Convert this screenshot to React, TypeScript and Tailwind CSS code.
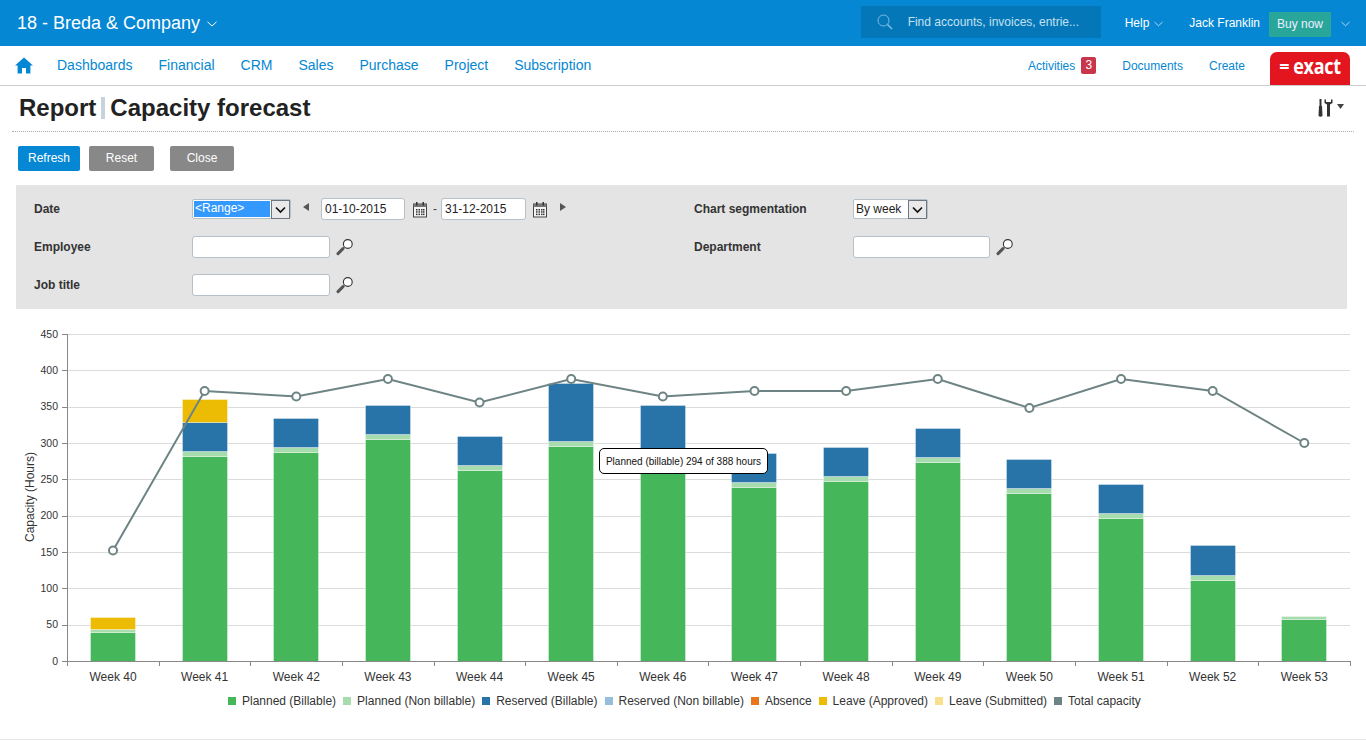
import React from "react";

const FONT = { fontFamily: '"Liberation Sans", Arial, sans-serif' };

const Chevron = ({ className = "", color = "#ffffff", w = 10, h = 6 }: { className?: string; color?: string; w?: number; h?: number }) => (
  <svg width={w} height={h} viewBox="0 0 10 6" className={className} fill="none">
    <path d="M0.5 0.8 L5 5 L9.5 0.8" stroke={color} strokeWidth="1" />
  </svg>
);

const Magnifier = () => (
  <svg width="18" height="18" viewBox="0 0 18 18" className="shrink-0">
    <circle cx="11.8" cy="6" r="4.4" fill="#fff" stroke="#333" strokeWidth="1.1" />
    <path d="M8.4 9.2 L7.2 10.4" stroke="#777" strokeWidth="1.4" />
    <path d="M7 10.6 L2 15.6" stroke="#555" strokeWidth="3" strokeLinecap="round" />
  </svg>
);

const Calendar = () => (
  <svg width="16" height="17" viewBox="0 0 16 17" className="shrink-0">
    <rect x="1.5" y="3" width="13" height="13" fill="#f4f4f4" stroke="#444" strokeWidth="1" />
    <rect x="1.5" y="3" width="13" height="3" fill="#777" />
    <rect x="4" y="1" width="1.5" height="3.5" fill="#333" />
    <rect x="10.5" y="1" width="1.5" height="3.5" fill="#333" />
    {[5, 7.5, 10, 12].map((x) => [8, 10.2, 12.6].map((y) => <rect key={`${x}-${y}`} x={x - 1} y={y} width="1.5" height="1.5" fill="#333" />))}
  </svg>
);

const Dropdown = () => (
  <div className="w-[19px] h-[19px] bg-[#e9e9e9] border border-[#6f7780] flex items-center justify-center shrink-0">
    <svg width="11" height="8" viewBox="0 0 11 8" fill="none">
      <path d="M1 1.5 L5.5 6 L10 1.5" stroke="#111" strokeWidth="1.7" />
    </svg>
  </div>
);

const TextField = ({ value = "", w }: { value?: string; w: string }) => (
  <div className={`${w} h-[22px] bg-white border border-[#b5c0c9] rounded-[3px] pl-[3px] text-[12px] leading-[20px] text-[#222]`}>{value}</div>
);

const ArrowTri = ({ dir }: { dir: "l" | "r" }) => (
  <svg width="6" height="8" viewBox="0 0 6 8" className="shrink-0 mt-[-4px]">
    <path d={dir === "l" ? "M6 0 V8 L0 4 Z" : "M0 0 V8 L6 4 Z"} fill="#555" />
  </svg>
);

const weeks = [40, 41, 42, 43, 44, 45, 46, 47, 48, 49, 50, 51, 52, 53];
// page-pixel tops of each segment: green, light green, blue, yellow
const tops: number[][] = [
  [633, 630, 630, 618],
  [457, 452, 423, 400],
  [453, 448, 419, 419],
  [440, 435, 406, 406],
  [471, 466, 437, 437],
  [447, 442, 384, 384],
  [458, 453, 406, 406],
  [488, 483, 454, 454],
  [482, 477, 448, 448],
  [463, 458, 429, 429],
  [494, 489, 460, 460],
  [519, 514, 485, 485],
  [581, 576, 546, 546],
  [620, 617, 617, 617],
];
const lineY = [550.5, 391, 396.5, 379, 402.5, 379, 396.5, 391, 391, 379, 408, 379, 391, 443];
const STEP = 91.64;
const cx = (i: number) => 113 + i * STEP;

const Chart = () => {
  const gridVals = [0, 50, 100, 150, 200, 250, 300, 350, 400, 450];
  const yOf = (v: number) => 661 - (v / 450) * 327;
  const colors = ["#46b65a", "#a7dcae", "#2874a8", "#ecbc05"];
  return (
    <svg width="1366" height="370" viewBox="0 325 1366 370" className="block" style={FONT}>
      {gridVals.slice(1).map((v) => (
        <line key={v} x1="67" x2="1350" y1={Math.round(yOf(v)) + 0.5} y2={Math.round(yOf(v)) + 0.5} stroke="#dcdcdc" />
      ))}
      {gridVals.map((v) => (
        <g key={v}>
          <line x1="62" x2="67" y1={Math.round(yOf(v)) + 0.5} y2={Math.round(yOf(v)) + 0.5} stroke="#888" />
          <text x="58" y={yOf(v) + 3.5} textAnchor="end" fontSize="10.5" fill="#333">{v}</text>
        </g>
      ))}
      {tops.map((t, i) => {
        const x = Math.round(cx(i) - 23);
        const segs = [
          [t[0], 662],
          [t[1], t[0]],
          [t[2], t[1]],
          [t[3], t[2]],
        ];
        return (
          <g key={i}>
            {segs.map(([a, b], k) =>
              b > a ? <rect key={k} x={x + 0.5} y={a - 0.5} width="45" height={b - a} fill={colors[k]} stroke="#ffffff" strokeOpacity="0.35" /> : null
            )}
          </g>
        );
      })}
      <line x1="67.5" x2="67.5" y1="334" y2="661" stroke="#888" />
      <line x1="67" x2="1351" y1="661.5" y2="661.5" stroke="#888" />
      {Array.from({ length: 15 }).map((_, i) => (
        <line key={i} x1={Math.round(67 + i * STEP) + 0.5} x2={Math.round(67 + i * STEP) + 0.5} y1="661" y2="666" stroke="#888" />
      ))}
      <polyline points={lineY.map((y, i) => `${cx(i)},${y}`).join(" ")} fill="none" stroke="#6e8484" strokeWidth="2" />
      {lineY.map((y, i) => (
        <circle key={i} cx={cx(i)} cy={y} r="4" fill="#fff" stroke="#6e8484" strokeWidth="2" />
      ))}
      {weeks.map((w, i) => (
        <text key={w} x={cx(i)} y="681" textAnchor="middle" fontSize="12" fill="#333">Week {w}</text>
      ))}
      <text transform="translate(33.5 497) rotate(-90)" textAnchor="middle" fontSize="12" fill="#333">Capacity (Hours)</text>
    </svg>
  );
};

const legend: [string, string][] = [
  ["Planned (Billable)", "#46b65a"],
  ["Planned (Non billable)", "#a7dcae"],
  ["Reserved (Billable)", "#2874a8"],
  ["Reserved (Non billable)", "#94bedb"],
  ["Absence", "#e8761c"],
  ["Leave (Approved)", "#ecbc05"],
  ["Leave (Submitted)", "#f9e08a"],
  ["Total capacity", "#6e8484"],
];

export default function App() {
  return (
    <div className="w-[1366px] h-[740px] overflow-hidden bg-white flex flex-col text-[#222]" style={FONT}>
      {/* top bar */}
      <header className="h-[46px] bg-[#0587d3] flex items-center text-white shrink-0">
        <div className="pl-[17px] flex items-center text-[18px] leading-none">
          18 - Breda &amp; Company
          <Chevron className="ml-[7px] mt-[2px]" />
        </div>
        <div className="ml-auto w-[240px] h-[32px] mb-[2px] bg-[#0477b8] flex items-center pl-[16px]">
          <svg width="16" height="17" viewBox="0 0 16 17" fill="none">
            <circle cx="6.5" cy="6.5" r="5.5" stroke="#7fbde3" strokeWidth="1" />
            <path d="M10.5 10.5 L15 15" stroke="#7fbde3" strokeWidth="1.6" />
          </svg>
          <span className="ml-[15px] text-[12px] text-[#c4e0f2]">Find accounts, invoices, entrie...</span>
        </div>
        <div className="ml-[24px] flex items-center text-[12px]">
          Help
          <Chevron className="ml-[5px] mt-[1px]" color="#bfe0f5" w={9} />
        </div>
        <div className="ml-[26px] text-[12px] whitespace-nowrap">Jack Franklin</div>
        <div className="ml-[9px] mt-[2px] w-[62px] h-[25px] bg-[#29a69a] flex items-center justify-center text-[12px] font-normal text-[#eef]">Buy now</div>
        <Chevron className="ml-[10px] mr-[16px] mt-[1px]" color="#bfe0f5" w={9} />
      </header>

      {/* nav bar */}
      <nav className="h-[40px] border-b border-[#cccccc] flex items-center shrink-0 relative">
        <svg width="18" height="17" viewBox="0 0 18 17" className="ml-[15px] mt-[-1px]">
          <path d="M9 0.5 L18 8.6 H15.4 V16.5 H11 V11 H7 V16.5 H2.6 V8.6 H0 Z" fill="#0587d3" />
        </svg>
        <div className="ml-[24px] flex gap-[26px] text-[14px] text-[#0587d3]">
          <span>Dashboards</span>
          <span>Financial</span>
          <span>CRM</span>
          <span>Sales</span>
          <span>Purchase</span>
          <span>Project</span>
          <span>Subscription</span>
        </div>
        <div className="ml-auto flex items-center text-[12px] text-[#0587d3]">
          <span>Activities</span>
          <span className="ml-[6px] w-[15px] h-[17px] bg-[#c9354a] rounded-[2px] text-white text-[12px] leading-[17px] text-center">3</span>
          <span className="ml-[26px]">Documents</span>
          <span className="ml-[26px]">Create</span>
          <div className="ml-[25px] mr-[16px] mt-[6px] w-[80px] h-[33px] bg-[#e3151f] rounded-t-[7px] flex items-center justify-center pb-[5px] text-white font-bold text-[18px] leading-none tracking-[-0.3px]" style={{ fontFamily: '"Open Sans", "Liberation Sans", sans-serif' }}>
            <span className="mr-[4px]">=</span>
            <span className="inline-block scale-y-[1.15]">exact</span>
          </div>
        </div>
      </nav>

      {/* title */}
      <div className="h-[46px] mx-[12px] border-b border-dotted border-[#aaaaaa] flex items-center pl-[7px] pb-[2px] shrink-0">
        <span className="text-[24px] font-bold text-[#222] leading-none">Report</span>
        <span className="w-[4px] h-[22px] ml-[5px] mr-[5px] bg-[#c6d3dc] mt-[1px]" />
        <span className="text-[24px] font-bold text-[#222] leading-none">Capacity forecast</span>
        <div className="ml-auto mr-[10px] flex items-center">
          <svg width="16" height="18" viewBox="0 0 16 18">
            <rect x="1.5" y="0" width="2" height="8" fill="#333" />
            <path d="M1 7 H4 L4.5 17 Q2.5 18.5 0.5 17 Z" fill="#333" />
            <path d="M6.5 0.5 V4 L9 5.5 V17.5 H12 V5.5 L14.5 4 V0.5 L13 0.5 V3 H8 V0.5 Z" fill="#333" />
          </svg>
          <svg width="7" height="5" viewBox="0 0 7 5" className="ml-[3px] mb-[2px]">
            <path d="M0 0 H7 L3.5 5 Z" fill="#444" />
          </svg>
        </div>
      </div>

      {/* buttons */}
      <div className="flex pl-[18px] mt-[14px] text-[12px] text-white shrink-0">
        <button className="w-[62px] h-[25px] bg-[#0587d3] rounded-[2px] leading-[25px]">Refresh</button>
        <button className="ml-[9px] w-[65px] h-[25px] bg-[#888888] rounded-[2px] leading-[25px]">Reset</button>
        <button className="ml-[16px] w-[64px] h-[25px] bg-[#888888] rounded-[2px] leading-[25px]">Close</button>
      </div>

      {/* filters */}
      <div className="mx-[16px] w-[1331px] mt-[14px] h-[124px] bg-[#e4e4e4] pt-[5px] flex flex-col text-[12px] shrink-0">
        <div className="h-[38px] flex items-center">
          <div className="w-[176px] pl-[18px] font-bold text-[#333]">Date</div>
          <div className="w-[502px] flex items-center">
            <div className="w-[99px] h-[20px] bg-white border border-[#b5c0c9] rounded-[2px] flex items-stretch">
              <div className="flex-1 m-[1px] bg-[#3399ff] text-white text-[12px] leading-[14px] pl-[1px]">&lt;Range&gt;</div>
              <Dropdown />
            </div>
            <span className="ml-[12px]"><ArrowTri dir="l" /></span>
            <div className="ml-[12px]"><TextField w="w-[84px]" value="01-10-2015" /></div>
            <div className="ml-[7px]"><Calendar /></div>
            <span className="ml-[5px] mr-[4px] text-[#444]">-</span>
            <TextField w="w-[85px]" value="31-12-2015" />
            <div className="ml-[6px]"><Calendar /></div>
            <span className="ml-[12px]"><ArrowTri dir="r" /></span>
          </div>
          <div className="w-[159px] font-bold text-[#333]">Chart segmentation</div>
          <div className="w-[75px] h-[20px] bg-white border border-[#b5c0c9] rounded-[2px] flex items-stretch pl-[2px] leading-[18px] text-[#222]">
            <span className="flex-1">By week</span>
            <Dropdown />
          </div>
        </div>
        <div className="h-[38px] flex items-center">
          <div className="w-[176px] pl-[18px] font-bold text-[#333]">Employee</div>
          <div className="w-[502px] flex items-center gap-[6px]">
            <TextField w="w-[138px]" />
            <Magnifier />
          </div>
          <div className="w-[159px] font-bold text-[#333]">Department</div>
          <div className="flex items-center gap-[6px]">
            <TextField w="w-[137px]" />
            <Magnifier />
          </div>
        </div>
        <div className="h-[38px] flex items-center">
          <div className="w-[176px] pl-[18px] font-bold text-[#333]">Job title</div>
          <div className="flex items-center gap-[6px]">
            <TextField w="w-[138px]" />
            <Magnifier />
          </div>
        </div>
      </div>

      {/* chart */}
      <div className="relative mt-[16px] shrink-0">
        <Chart />
        <div className="absolute left-[599px] top-[123px] w-[169px] h-[26px] bg-white border border-black rounded-[5px] flex items-center justify-center text-[10px] text-[#111] whitespace-nowrap">
          Planned (billable) 294 of 388 hours
        </div>
      </div>

      {/* legend */}
      <div className="pl-[228px] flex items-center gap-[7px] text-[12px] text-[#333] h-[12px] shrink-0">
        {legend.map(([label, color]) => (
          <div key={label} className="flex items-center gap-[6px] whitespace-nowrap">
            <span className="w-[8px] h-[8px] inline-block" style={{ background: color }} />
            {label}
          </div>
        ))}
      </div>

      <div className="mt-auto border-b border-[#e8e8e8]" />
    </div>
  );
}
